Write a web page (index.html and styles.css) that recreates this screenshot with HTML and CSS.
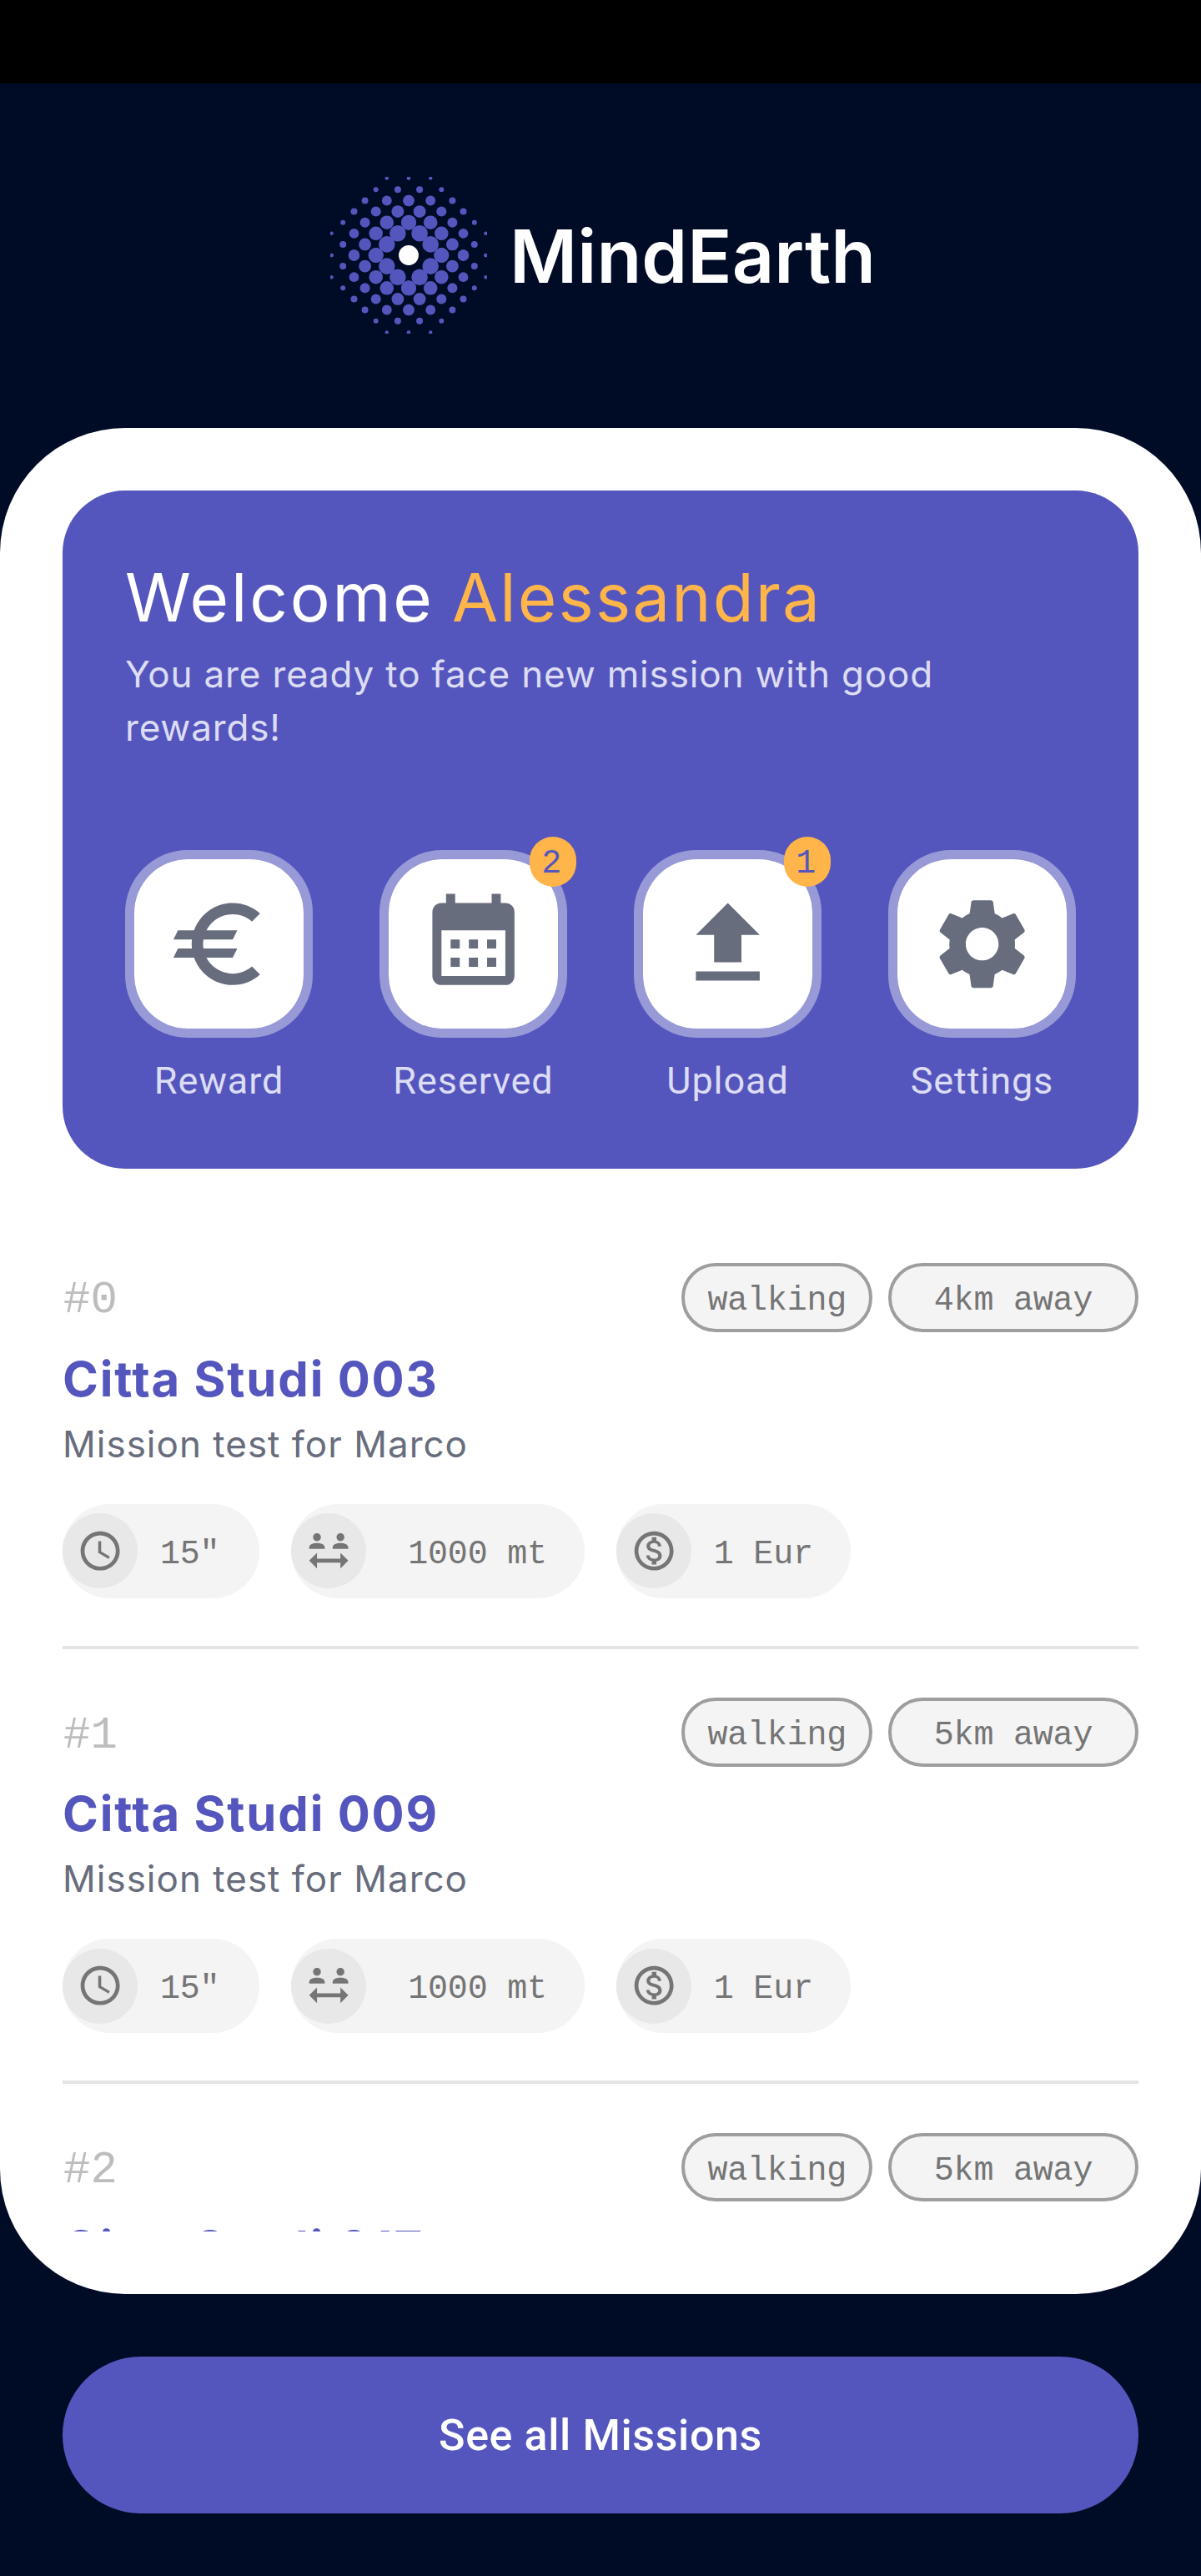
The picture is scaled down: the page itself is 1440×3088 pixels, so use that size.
FILE: index.html
```
<!DOCTYPE html>
<html lang="en">
<head>
<meta charset="utf-8">
<title>MindEarth</title>
<link rel="stylesheet" href="styles.css">
</head>
<body>
<svg class="sprite" aria-hidden="true">
  <symbol id="i-euro" viewBox="0 0 24 24"><path d="M15 18.5c-2.51 0-4.68-1.42-5.76-3.5H15l1-2H8.58c-.05-.33-.08-.66-.08-1s.03-.67.08-1H15l1-2H9.24C10.32 6.92 12.5 5.5 15 5.5c1.61 0 3.09.59 4.23 1.57L21 5.3C19.41 3.87 17.3 3 15 3c-3.92 0-7.24 2.51-8.48 6H3l-1 2h4.06c-.04.33-.06.66-.06 1s.02.67.06 1H3l-1 2h4.52c1.24 3.49 4.56 6 8.48 6 2.31 0 4.41-.87 6-2.3l-1.78-1.77c-1.13.98-2.6 1.57-4.22 1.57z"/></symbol>
  <symbol id="i-calendar" viewBox="0 0 24 24"><path fill-rule="evenodd" d="M6 1h2v2h8V1h2v2h1a2 2 0 0 1 2 2v14a2 2 0 0 1-2 2H5a2 2 0 0 1-2-2V5a2 2 0 0 1 2-2h1V1zM5 9v10h14V9H5zM7 11h2v2H7zM11 11h2v2h-2zM15 11h2v2h-2zM7 15h2v2H7zM11 15h2v2h-2zM15 15h2v2h-2z"/></symbol>
  <symbol id="i-upload" viewBox="0 0 24 24"><path d="M9 16v-6H5l7-7 7 7h-4v6H9zm-4 4v-2h14v2H5z"/></symbol>
  <symbol id="i-settings" viewBox="0 0 24 24"><path d="M19.14 12.94c.04-.3.06-.61.06-.94 0-.32-.02-.64-.07-.94l2.03-1.58c.18-.14.23-.41.12-.61l-1.92-3.32c-.12-.22-.37-.29-.59-.22l-2.39.96c-.5-.38-1.03-.7-1.62-.94l-.36-2.54c-.04-.24-.24-.41-.48-.41h-3.84c-.24 0-.43.17-.47.41l-.36 2.54c-.59.24-1.13.57-1.62.94l-2.39-.96c-.22-.08-.47 0-.59.22L2.74 8.87c-.12.21-.08.47.12.61l2.03 1.58c-.05.3-.09.63-.09.94s.02.64.07.94l-2.03 1.58c-.18.14-.23.41-.12.61l1.92 3.32c.12.22.37.29.59.22l2.39-.96c.5.38 1.03.7 1.62.94l.36 2.54c.05.24.24.41.48.41h3.84c.24 0 .44-.17.47-.41l.36-2.54c.59-.24 1.13-.56 1.62-.94l2.39.96c.22.08.47 0 .59-.22l1.92-3.32c.12-.22.07-.47-.12-.61l-2.01-1.58zM12 15.6c-1.98 0-3.6-1.62-3.6-3.6s1.62-3.6 3.6-3.6 3.6 1.62 3.6 3.6-1.62 3.6-3.6 3.6z"/></symbol>
  <symbol id="i-clock" viewBox="0 0 24 24"><path d="M11.99 2C6.47 2 2 6.48 2 12s4.47 10 9.99 10C17.52 22 22 17.52 22 12S17.52 2 11.99 2zM12 20c-4.42 0-8-3.58-8-8s3.58-8 8-8 8 3.58 8 8-3.58 8-8 8zm.5-13H11v6l5.25 3.15.75-1.23-4.5-2.67z"/></symbol>
  <symbol id="i-distance" viewBox="0 0 24 24"><path d="M4 5c0-1.11.89-2 2-2s2 .89 2 2-.89 2-2 2-2-.89-2-2zm4.78 3.58C7.93 8.21 6.99 8 6 8s-1.93.21-2.78.58C2.48 8.9 2 9.62 2 10.43V11h8v-.57c0-.81-.48-1.53-1.22-1.85zM18 7c1.11 0 2-.89 2-2s-.89-2-2-2-2 .89-2 2 .89 2 2 2zm2.78 1.58C19.93 8.21 18.99 8 18 8s-1.93.21-2.78.58c-.74.32-1.22 1.04-1.22 1.85V11h8v-.57c0-.81-.48-1.53-1.22-1.85zM22 17l-4-4v3H6v-3l-4 4 4 4v-3h12v3l4-4z"/></symbol>
  <symbol id="i-money" viewBox="0 0 24 24"><path d="M12 2C6.48 2 2 6.48 2 12s4.48 10 10 10 10-4.48 10-10S17.52 2 12 2zm0 18c-4.41 0-8-3.59-8-8s3.59-8 8-8 8 3.59 8 8-3.59 8-8 8zm.31-8.86c-1.77-.45-2.34-.94-2.34-1.67 0-.84.79-1.43 2.1-1.43 1.38 0 1.9.66 1.94 1.64h1.71c-.05-1.34-.87-2.57-2.49-2.97V5H10.9v1.69c-1.51.32-2.72 1.3-2.72 2.81 0 1.79 1.49 2.69 3.66 3.21 1.95.46 2.34 1.15 2.34 1.87 0 .53-.39 1.39-2.1 1.39-1.6 0-2.23-.72-2.32-1.64H8.04c.1 1.7 1.36 2.66 2.86 2.97V19h2.34v-1.67c1.52-.29 2.72-1.16 2.73-2.77-.01-2.2-1.9-2.96-3.66-3.42z"/></symbol>
  <symbol id="q-dots" viewBox="0 0 94 94" overflow="visible">
    <circle cx="0" cy="39.3" r="9"/><circle cx="0" cy="65.5" r="6.7"/><circle cx="0" cy="92.4" r="2.2"/>
    <circle cx="13.1" cy="26.2" r="9.8"/><circle cx="13.1" cy="52.4" r="7.4"/><circle cx="13.1" cy="78.8" r="4"/>
    <circle cx="26.2" cy="13.1" r="9.8"/><circle cx="26.2" cy="39.3" r="8.3"/><circle cx="26.2" cy="65.5" r="5.9"/><circle cx="26.2" cy="92.4" r="2.2"/>
    <circle cx="39.3" cy="0" r="9"/><circle cx="39.3" cy="26.2" r="8.3"/><circle cx="39.3" cy="52.4" r="6"/><circle cx="39.3" cy="78.8" r="3"/>
    <circle cx="52.4" cy="13.1" r="7.4"/><circle cx="52.4" cy="39.3" r="6"/><circle cx="52.4" cy="65.5" r="4"/>
    <circle cx="65.5" cy="0" r="6.7"/><circle cx="65.5" cy="26.2" r="5.9"/><circle cx="65.5" cy="52.4" r="4"/>
    <circle cx="78.8" cy="13.1" r="4"/><circle cx="78.8" cy="39.3" r="3"/>
    <circle cx="92.4" cy="0" r="2.2"/><circle cx="92.4" cy="26.2" r="2.2"/>
  </symbol>
</svg>

<div class="screen">
  <div class="status-bar"></div>

  <header class="brand">
    <svg class="brand-mark" viewBox="-94 -94 188 188">
      <g class="brand-dots">
        <use href="#q-dots" width="94" height="94"/>
        <use href="#q-dots" width="94" height="94" transform="scale(-1 1)"/>
        <use href="#q-dots" width="94" height="94" transform="scale(1 -1)"/>
        <use href="#q-dots" width="94" height="94" transform="scale(-1 -1)"/>
      </g>
      <circle class="brand-core" r="11.9"/>
    </svg>
    <span class="brand-name">MindEarth</span>
  </header>

  <main class="panel">
    <section class="card">
      <h1 class="welcome">Welcome <span class="user">Alessandra</span></h1>
      <p class="lead">You are ready to face new mission with good rewards!</p>
      <nav class="actions">
        <a class="action"><span class="tile"><svg class="tile-icon"><use href="#i-euro"/></svg></span><span class="action-label">Reward</span></a>
        <a class="action"><span class="tile"><svg class="tile-icon"><use href="#i-calendar"/></svg><span class="badge">2</span></span><span class="action-label">Reserved</span></a>
        <a class="action"><span class="tile"><svg class="tile-icon"><use href="#i-upload"/></svg><span class="badge">1</span></span><span class="action-label">Upload</span></a>
        <a class="action"><span class="tile"><svg class="tile-icon"><use href="#i-settings"/></svg></span><span class="action-label">Settings</span></a>
      </nav>
    </section>

    <div class="missions">
      <article class="mission">
        <div class="mission-head"><span class="index">#0</span><span class="pill pill-mode">walking</span><span class="pill pill-far">4km away</span></div>
        <h2 class="mission-title">Citta Studi 003</h2>
        <p class="mission-text">Mission test for Marco</p>
        <div class="chips">
          <span class="chip chip-time"><span class="chip-dot"><svg class="chip-icon"><use href="#i-clock"/></svg></span><span class="chip-text">15"</span></span>
          <span class="chip chip-length"><span class="chip-dot"><svg class="chip-icon"><use href="#i-distance"/></svg></span><span class="chip-text">1000 mt</span></span>
          <span class="chip chip-pay"><span class="chip-dot"><svg class="chip-icon"><use href="#i-money"/></svg></span><span class="chip-text">1 Eur</span></span>
        </div>
      </article>
      <article class="mission">
        <div class="mission-head"><span class="index">#1</span><span class="pill pill-mode">walking</span><span class="pill pill-far">5km away</span></div>
        <h2 class="mission-title">Citta Studi 009</h2>
        <p class="mission-text">Mission test for Marco</p>
        <div class="chips">
          <span class="chip chip-time"><span class="chip-dot"><svg class="chip-icon"><use href="#i-clock"/></svg></span><span class="chip-text">15"</span></span>
          <span class="chip chip-length"><span class="chip-dot"><svg class="chip-icon"><use href="#i-distance"/></svg></span><span class="chip-text">1000 mt</span></span>
          <span class="chip chip-pay"><span class="chip-dot"><svg class="chip-icon"><use href="#i-money"/></svg></span><span class="chip-text">1 Eur</span></span>
        </div>
      </article>
      <article class="mission">
        <div class="mission-head"><span class="index">#2</span><span class="pill pill-mode">walking</span><span class="pill pill-far">5km away</span></div>
        <h2 class="mission-title">Citta Studi 017</h2>
      </article>
    </div>
  </main>

  <footer class="footer"><button class="see-all">See all Missions</button></footer>
</div>
</body>
</html>
```
FILE: styles.css
```
* { box-sizing: border-box; }

body {
  margin: 0;
  background: #000b26;
  font-family: Inter, "Liberation Sans", sans-serif;
}

h1, h2, p { margin: 0; }

.sprite { display: none; }

.screen {
  width: 1440px;
  height: 3088px;
  display: flex;
  flex-direction: column;
  overflow: hidden;
}

.status-bar {
  flex: none;
  height: 100px;
  background: #000;
}

/* Brand */
.brand {
  flex: none;
  height: 412.5px;
  display: flex;
  align-items: center;
  padding-left: 396px;
}

.brand-mark {
  flex: none;
  width: 188px;
  height: 188px;
}

.brand-dots { fill: #5456bd; }
.brand-core { fill: #fff; }

.brand-name {
  width: 460px;
  padding: 2px 0 0 27px;
  color: #fff;
  font-size: 88px;
  font-weight: 600;
  line-height: 106px;
  letter-spacing: 0.1px;
  clip-path: inset(0);
}

/* White panel */
.panel {
  flex: none;
  height: 2237.5px;
  padding: 75px;
  display: flex;
  flex-direction: column;
  background: #fff;
  border-radius: 150px;
}

.card {
  flex: none;
  height: 813.75px;
  padding: 80px 75px 0;
  background: #5456bd;
  border-radius: 75px;
}

.welcome {
  color: #fff;
  font-size: 80px;
  font-weight: 400;
  line-height: 96px;
  letter-spacing: 2.8px;
  word-spacing: -4px;
  white-space: nowrap;
}

.user {
  color: #ffb54a;
  letter-spacing: 2.1px;
}

.lead {
  margin-top: 12.5px;
  color: #dcdcf3;
  font-size: 44px;
  font-weight: 400;
  line-height: 64px;
  letter-spacing: 0.83px;
}

.actions {
  margin-top: 114.75px;
  display: flex;
  justify-content: space-between;
}

.action {
  width: 225px;
  display: flex;
  flex-direction: column;
  align-items: center;
  gap: 26px;
}

.tile {
  position: relative;
  width: 225px;
  height: 225px;
  display: flex;
  align-items: center;
  justify-content: center;
  background: #fff;
  background-clip: padding-box;
  border: 11.25px solid rgba(255, 255, 255, 0.4);
  border-radius: 75px;
}

.tile-icon {
  width: 131.25px;
  height: 131.25px;
  fill: #676d7d;
}

.badge {
  position: absolute;
  top: -26.5px;
  left: 168.5px;
  width: 56.5px;
  height: 60px;
  padding: 6px 3px 0 0;
  border-radius: 28px;
  background: #ffb54a;
  color: #5456bd;
  font: 40px/54px "Liberation Mono", monospace;
  text-align: center;
}

.action-label {
  color: #dcdcf3;
  font: 45px/52px Roboto, sans-serif;
  letter-spacing: 0.9px;
}

/* Mission list */
.missions {
  flex: 1;
  min-height: 0;
  margin-top: 54.25px;
  overflow: hidden;
}

.mission {
  padding: 58.5px 0 57.25px;
  border-bottom: 4px solid #e4e4e4;
}

.mission-head {
  height: 82.5px;
  display: flex;
  align-items: center;
  gap: 18.75px;
  font-family: "Liberation Mono", monospace;
}

.index {
  margin-right: auto;
  padding: 7px 0 0 1px;
  color: #bdbdbd;
  font-size: 54px;
}

.pill {
  height: 82.5px;
  padding-top: 8px;
  border: 4px solid #9e9e9e;
  border-radius: 41.25px;
  background: #f4f4f4;
  color: #757575;
  font-size: 40px;
  line-height: 67px;
  letter-spacing: -0.2px;
  text-align: center;
}

.pill-mode { width: 229px; }
.pill-far { width: 300px; }

.mission-title {
  margin-top: 21px;
  color: #5456bd;
  font-size: 58px;
  font-weight: 700;
  line-height: 70px;
  letter-spacing: 1.8px;
}

.mission-text {
  margin-top: 15.5px;
  color: #676d7d;
  font-size: 44px;
  line-height: 56px;
  letter-spacing: 1px;
}

.chips {
  margin-top: 44px;
  display: flex;
  gap: 37.5px;
}

.chip {
  height: 112.5px;
  display: flex;
  align-items: center;
  gap: 27px;
  border-radius: 56.25px;
  background: #f4f4f4;
  color: #757575;
  font: 40px/1 "Liberation Mono", monospace;
}

.chip-time { width: 236.25px; }
.chip-length { width: 352.5px; gap: 50.5px; }
.chip-pay { width: 281.25px; }

.chip-dot {
  width: 90px;
  height: 90px;
  display: flex;
  align-items: center;
  justify-content: center;
  border-radius: 50%;
  background: #e8e8e8;
}

.chip-icon {
  width: 56.25px;
  height: 56.25px;
  fill: #757575;
}

.chip-text {
  padding-top: 9px;
  letter-spacing: -0.2px;
  white-space: nowrap;
}

/* Footer */
.footer { padding: 75px 75px 0; }

.see-all {
  display: block;
  width: 100%;
  height: 187.5px;
  padding: 3px 0 0;
  border: 0;
  border-radius: 93.75px;
  background: #5456bd;
  color: #fff;
  font: 500 52px/60px Roboto, sans-serif;
  letter-spacing: 0.6px;
}
```
